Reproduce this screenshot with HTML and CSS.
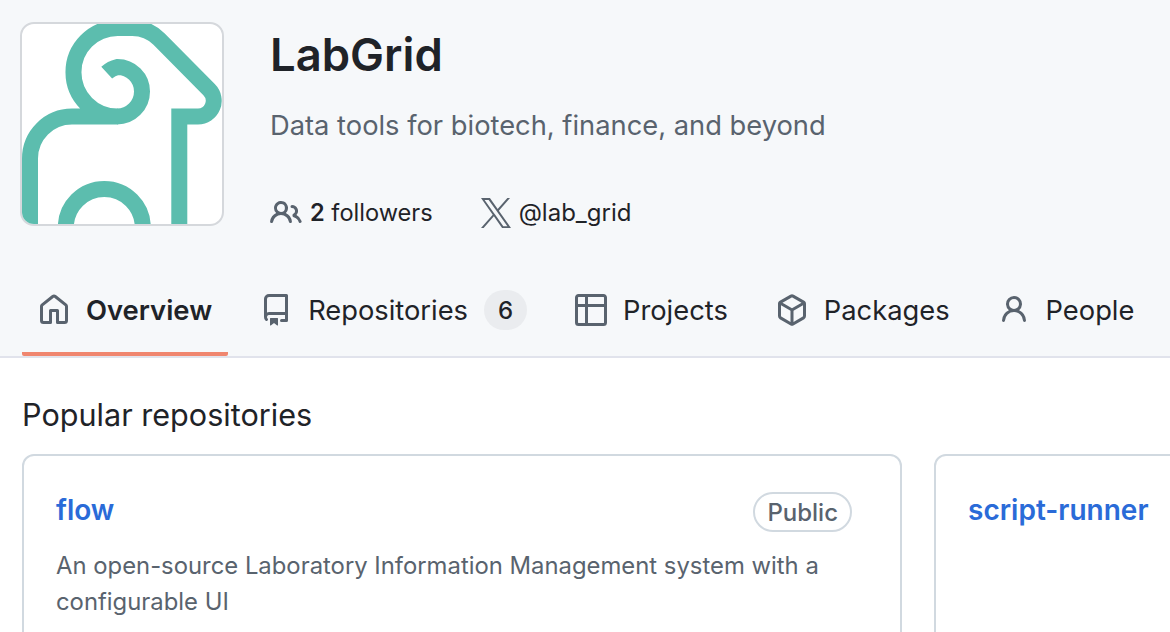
FILE: index.html
```html
<!DOCTYPE html>
<html lang="en">
<head>
<meta charset="utf-8">
<title>LabGrid</title>
<link rel="stylesheet" href="styles.css">
</head>
<body>
<header class="org">
  <div class="org-top">
    <div class="avatar">
      <svg class="logo" viewBox="22 24 200 200" aria-label="LabGrid logo">
        <g class="logo-stroke">
          <path d="M30 240V158.5A42 42 0 0 1 72 116.5H117.7A44 44 0 0 1 117.7 28H132.2A38 38 0 0 1 159.1 39.1L209.1 89.7A15.7 15.7 0 0 1 198 116.5H179.3V240"/>
          <path d="M117 116.5A25 25 0 0 0 142 91.5A24.5 24.5 0 0 0 117.5 67A24 24 0 0 0 106.7 72.7"/>
          <circle cx="104.3" cy="227.5" r="38.5"/>
        </g>
      </svg>
    </div>
    <div class="org-info">
      <h1 class="org-name">LabGrid</h1>
      <p class="org-desc">Data tools for biotech, finance, and beyond</p>
      <div class="org-meta">
        <a class="meta-item meta-followers">
          <svg class="meta-icon" viewBox="0 0 16 16"><path d="M2 5.5a3.5 3.5 0 1 1 5.898 2.549 5.508 5.508 0 0 1 3.034 4.084.75.75 0 1 1-1.482.235 4 4 0 0 0-7.9 0 .75.75 0 0 1-1.482-.236A5.507 5.507 0 0 1 3.102 8.05 3.493 3.493 0 0 1 2 5.5ZM11 4a3.001 3.001 0 0 1 2.22 5.018 5.01 5.01 0 0 1 2.56 3.012.749.749 0 0 1-.885.954.752.752 0 0 1-.549-.514 3.507 3.507 0 0 0-2.522-2.372.75.75 0 0 1-.574-.73v-.352a.75.75 0 0 1 .416-.672A1.5 1.5 0 0 0 11 5.5.75.75 0 0 1 11 4Zm-5.5-.5a2 2 0 1 0-.001 3.999A2 2 0 0 0 5.5 3.5Z"/></svg>
          <span><b>2</b> followers</span>
        </a>
        <a class="meta-item meta-handle">
          <svg class="meta-icon meta-x" viewBox="0 0 16 16"><path d="M9.522 6.775 15.48 0h-1.412L8.894 5.883 4.765 0H0l6.247 8.9L0 16h1.412l5.46-6.21L11.235 16H16L9.522 6.775Zm-1.933 2.2-.633-.886L1.92 1.04h2.168l4.064 5.69.633.886 5.283 7.396H11.9L7.589 8.975Z"/></svg>
          <span>@lab_grid</span>
        </a>
      </div>
    </div>
  </div>
  <nav class="tabs">
    <a class="tab tab-active">
      <svg class="tab-icon" viewBox="0 0 16 16"><path d="M6.906.664a1.749 1.749 0 0 1 2.187 0l5.25 4.2c.415.332.657.835.657 1.367v7.019A1.75 1.75 0 0 1 13.25 15h-3.5a.75.75 0 0 1-.75-.75V9H7v5.25a.75.75 0 0 1-.75.75h-3.5A1.75 1.75 0 0 1 1 13.25V6.23c0-.531.242-1.034.657-1.366l5.25-4.2Zm1.25 1.171a.25.25 0 0 0-.312 0l-5.25 4.2a.25.25 0 0 0-.094.196v7.019c0 .138.112.25.25.25H5.5V8.25a.75.75 0 0 1 .75-.75h3.5a.75.75 0 0 1 .75.75v5.25h2.75a.25.25 0 0 0 .25-.25V6.23a.25.25 0 0 0-.094-.195Z"/></svg>
      <span>Overview</span>
    </a>
    <a class="tab">
      <svg class="tab-icon" viewBox="0 0 16 16"><path d="M2 2.5A2.5 2.5 0 0 1 4.5 0h8.75a.75.75 0 0 1 .75.75v12.5a.75.75 0 0 1-.75.75h-2.5a.75.75 0 0 1 0-1.5h1.75v-2h-8a1 1 0 0 0-.714 1.7.75.75 0 1 1-1.072 1.05A2.495 2.495 0 0 1 2 11.5Zm10.5-1h-8a1 1 0 0 0-1 1v6.708A2.486 2.486 0 0 1 4.5 9h8ZM5 12.25a.25.25 0 0 1 .25-.25h3.5a.25.25 0 0 1 .25.25v3.25a.25.25 0 0 1-.4.2l-1.45-1.087a.249.249 0 0 0-.3 0L5.4 15.7a.25.25 0 0 1-.4-.2Z"/></svg>
      <span>Repositories</span>
      <span class="count">6</span>
    </a>
    <a class="tab">
      <svg class="tab-icon" viewBox="0 0 16 16"><path d="M0 1.75C0 .784.784 0 1.75 0h12.5C15.216 0 16 .784 16 1.75v12.5A1.75 1.75 0 0 1 14.25 16H1.75A1.75 1.75 0 0 1 0 14.25ZM6.5 6.5v8h7.75a.25.25 0 0 0 .25-.25V6.5Zm8-1.5V1.75a.25.25 0 0 0-.25-.25H6.5V5Zm-13 1.5v7.75c0 .138.112.25.25.25H5v-8ZM5 5V1.5H1.75a.25.25 0 0 0-.25.25V5Z"/></svg>
      <span>Projects</span>
    </a>
    <a class="tab">
      <svg class="tab-icon" viewBox="0 0 16 16"><path d="m8.878.392 5.25 3.045c.54.314.872.89.872 1.514v6.098a1.75 1.75 0 0 1-.872 1.514l-5.25 3.045a1.75 1.75 0 0 1-1.756 0l-5.25-3.045A1.75 1.75 0 0 1 1 11.049V4.951c0-.624.332-1.201.872-1.514L7.122.392a1.75 1.75 0 0 1 1.756 0ZM7.875 1.69l-4.63 2.685L8 7.133l4.755-2.758-4.63-2.685a.248.248 0 0 0-.25 0ZM2.5 5.677v5.372c0 .09.047.171.125.216l4.625 2.683V8.432Zm6.25 8.271 4.625-2.683a.25.25 0 0 0 .125-.216V5.677L8.75 8.432Z"/></svg>
      <span>Packages</span>
    </a>
    <a class="tab">
      <svg class="tab-icon" viewBox="0 0 16 16"><path d="M10.561 8.073a6.005 6.005 0 0 1 3.432 5.142.75.75 0 1 1-1.498.07 4.5 4.5 0 0 0-8.99 0 .75.75 0 0 1-1.498-.07 6.004 6.004 0 0 1 3.431-5.142 3.999 3.999 0 1 1 5.123 0ZM10.5 5a2.5 2.5 0 1 0-5 0 2.5 2.5 0 0 0 5 0Z"/></svg>
      <span>People</span>
    </a>
  </nav>
</header>
<main class="content">
  <h2 class="section-title">Popular repositories</h2>
  <div class="cards">
    <article class="card">
      <div class="card-head">
        <a class="repo-link">flow</a>
        <span class="badge">Public</span>
      </div>
      <p class="repo-desc">An open-source Laboratory Information Management system with a configurable UI</p>
    </article>
    <article class="card">
      <div class="card-head">
        <a class="repo-link">script-runner</a>
      </div>
    </article>
  </div>
</main>
</body>
</html>
```
FILE: styles.css
```css
* { box-sizing: border-box; }
html, body { margin: 0; padding: 0; }
body {
  width: 1170px;
  height: 632px;
  overflow: hidden;
  background: #fff;
  color: #1f2328;
  font-family: Inter, "Liberation Sans", sans-serif;
}
.org {
  background: #f6f8fa;
  border-bottom: 2px solid #e1e3ec;
  height: 358px;
  display: flex;
  flex-direction: column;
}
.org-top {
  display: flex;
  gap: 46px;
  padding: 22px 0 0 20px;
  height: 276px;
  overflow: hidden;
}
.avatar {
  width: 204px;
  height: 204px;
  flex: none;
  background: #fff;
  border: 2px solid #d5d8dc;
  border-radius: 14px;
  overflow: hidden;
}
.logo { display: block; width: 200px; height: 200px; }
.logo-stroke { fill: none; stroke: #5cbdae; stroke-width: 16; }
.org-info { display: flex; flex-direction: column; }
.org-name {
  margin: 1px 0 0;
  font-size: 45.4px;
  line-height: 64px;
  font-weight: 600;
}
.org-desc {
  margin: 18px 0 0;
  font-size: 27.3px;
  line-height: 42px;
  color: #59636e;
}
.org-meta {
  display: flex;
  gap: 48px;
  margin-top: 48px;
  font-size: 23.6px;
  line-height: 36px;
  align-items: center;
}
.meta-item { display: flex; align-items: center; gap: 8px; }
.meta-item b { font-weight: 600; }
.meta-handle { font-size: 24px; }
.meta-icon { width: 32px; height: 32px; fill: #59636e; flex: none; }
.meta-x { width: 30px; height: 30px; }
.tabs { display: flex; gap: 16px; padding-left: 22px; height: 80px; }
.tab {
  display: flex;
  align-items: center;
  gap: 16px;
  padding: 0 16px 8px;
  font-size: 27.3px;
  height: 80px;
  border-bottom: 4px solid transparent;
  border-radius: 0 0 2px 2px;
}
.tab-active { font-size: 27.4px; font-weight: 600; border-bottom-color: #f0866f; }
.tab-icon { width: 32px; height: 32px; fill: #59636e; flex: none; }
.count {
  min-width: 43px;
  height: 40px;
  border-radius: 20px;
  background: #eaecef;
  font-size: 24px;
  font-weight: 500;
  display: flex;
  align-items: center;
  justify-content: center;
}
.content { padding: 0 0 0 22px; }
.section-title {
  margin: 0;
  padding-top: 37px;
  font-size: 30.6px;
  line-height: 40px;
  font-weight: 400;
}
.cards {
  display: grid;
  grid-template-columns: 880px 880px;
  gap: 32px;
  margin-top: 19px;
  height: 178px;
  overflow: hidden;
}
.card {
  height: 400px;
  border: 2px solid #d1d9e0;
  border-radius: 12px;
  padding: 34px 48px 0 32px;
  background: #fff;
}
.card-head { display: flex; justify-content: space-between; align-items: flex-start; }
.repo-link { font-size: 28px; line-height: 40px; font-weight: 600; color: #2a6bd8; }
.badge {
  margin-top: 2px;
  height: 40px;
  padding: 0 12px;
  display: flex;
  align-items: center;
  border: 2px solid #d1d9e0;
  border-radius: 20px;
  font-size: 24px;
  font-weight: 500;
  color: #59636e;
}
.repo-desc {
  margin: 16px 0 0;
  font-size: 23.85px;
  line-height: 36px;
  color: #59636e;
  width: 790px;
}
```
